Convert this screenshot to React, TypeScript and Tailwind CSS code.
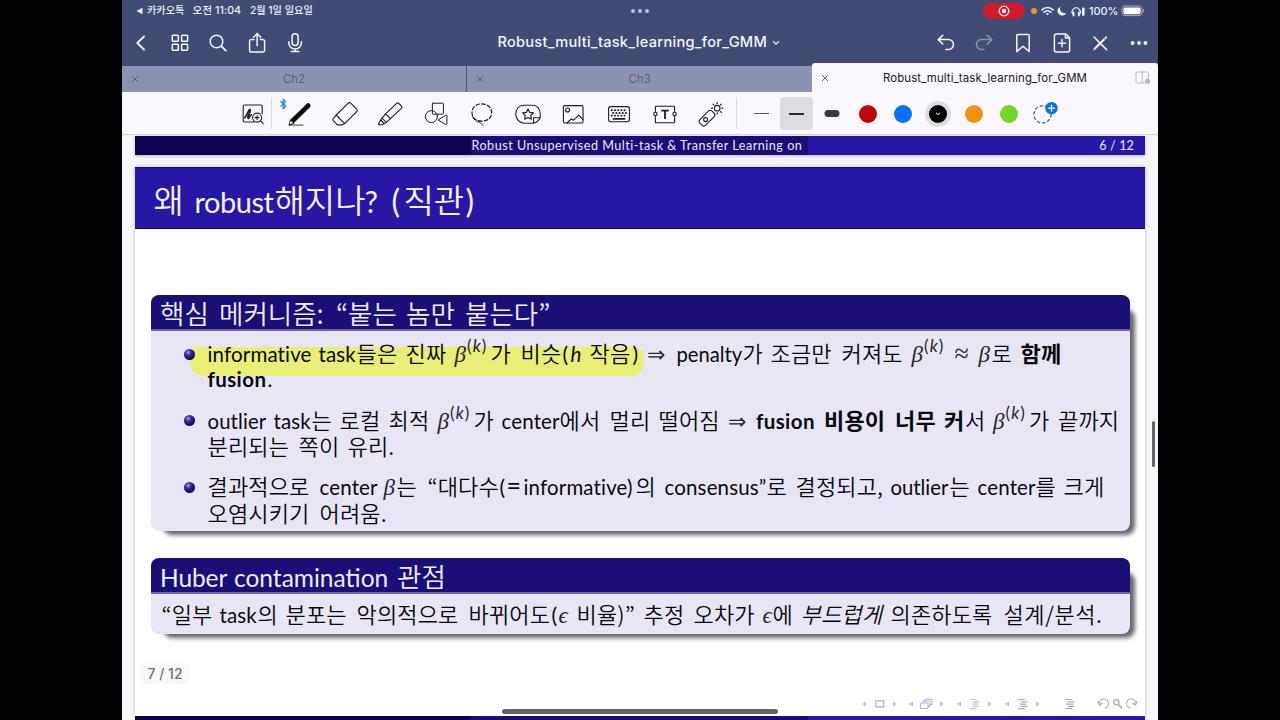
import React from "react";

type P = { children?: React.ReactNode; className?: string };

/* Korean, Latin and math runs of a slide line; each run has its own measured width */
const K = ({ children, className = "" }: P) => (
  <span className={`shrink-0 whitespace-pre font-['Noto_Sans_CJK_KR',sans-serif] ${className}`}>{children}</span>
);
const L = ({ children, className = "text-[20.5px] font-normal" }: P) => (
  <span className={`shrink-0 whitespace-pre font-[Lato,sans-serif] ${className}`}>{children}</span>
);
const M = ({ children, className = "" }: P) => (
  <span className={`shrink-0 whitespace-pre font-['Liberation_Serif',serif] leading-none text-[#26262e] ${className}`}>{children}</span>
);
const BetaK = ({ className = "" }: P) => (
  <M className={`flex text-[23px] ${className}`}>
    <i>β</i>
    <span className="relative -top-[6px] left-[1px] font-[Lato,sans-serif] text-[17px] font-normal tracking-[1px]">
      (<i>k</i>)
    </span>
  </M>
);
const Line = ({ children, className = "" }: P) => (
  <div className={`flex h-[26.5px] items-baseline text-[22px] font-[350] leading-[26.5px] tracking-[0.15px] text-[#08080f] ${className}`}>
    {children}
  </div>
);
const Item = ({ children }: P) => (
  <li className="flex h-[53px]">
    <span className="mr-[12.5px] mt-[9.5px] h-[11px] w-[11px] shrink-0 rounded-full bg-[radial-gradient(circle_at_38%_32%,#a9a4e0_0%,#3a2f9a_28%,#160b66_62%,#0d0540_100%)]" />
    <div>{children}</div>
  </li>
);

const Svg = ({ w = 26, h = 26, sw = 1.5, className = "", children }: P & { w?: number; h?: number; sw?: number }) => (
  <svg
    width={w}
    height={h}
    viewBox={`0 0 ${w} ${h}`}
    fill="none"
    stroke="currentColor"
    strokeWidth={sw}
    strokeLinecap="round"
    strokeLinejoin="round"
    className={`shrink-0 ${className}`}
  >
    {children}
  </svg>
);
const NavCell = ({ children, className = "" }: P) => (
  <button className={`flex w-[38.6px] items-center justify-center ${className}`}>{children}</button>
);
const ToolCell = ({ children }: P) => (
  <button className="relative flex w-[45.75px] items-center justify-center">{children}</button>
);
const PenCell = ({ children }: P) => (
  <button className="relative flex w-[35.45px] shrink-0 items-center justify-center">{children}</button>
);

const StatusBar = () => (
  <div className="flex h-[22px] items-center text-[11px] font-medium text-[#eef0fa]">
    <div className="flex flex-1 items-center pl-[14px] font-[Inter,'Noto_Sans_CJK_KR',sans-serif]">
      <svg width="7" height="8" viewBox="0 0 7 8" className="mr-[4px]">
        <path d="M0.5 4 6.5 0.8V7.2Z" fill="currentColor" />
      </svg>
      <span className="w-[45.5px] whitespace-nowrap text-[10.2px]">카카오톡</span>
      <span className="w-[57.5px] whitespace-nowrap text-[10.7px]">오전 11:04</span>
      <span className="whitespace-nowrap text-[10.2px]">2월 1일 일요일</span>
    </div>
    <div className="flex gap-[3px]">
      <span className="h-[4px] w-[4px] rounded-full bg-[#b3bfe6]" />
      <span className="h-[4px] w-[4px] rounded-full bg-[#b3bfe6]" />
      <span className="h-[4px] w-[4px] rounded-full bg-[#b3bfe6]" />
    </div>
    <div className="flex flex-1 items-center justify-end pr-[14px]">
      <span className="mr-[6px] flex h-[16px] w-[42px] items-center justify-center rounded-full bg-[#d01c2a]">
        <Svg w={12} h={12} sw={1.3}>
          <circle cx="6" cy="6" r="4.8" />
          <circle cx="6" cy="6" r="2.2" fill="currentColor" stroke="none" />
        </Svg>
      </span>
      <span className="mr-[4px] h-[6px] w-[6px] rounded-full bg-[#f0922b]" />
      <Svg w={13} h={10} sw={1.7} className="mr-[3px]">
        <path d="M1 3.8C4.2.7 8.8.7 12 3.8M3.2 6.1c1.9-1.8 4.7-1.8 6.6 0" />
        <path d="M6.5 9.3 4.9 7.7a2.3 2.3 0 0 1 3.2 0Z" fill="currentColor" stroke="none" />
      </Svg>
      <svg width="10" height="10" viewBox="0 0 10 10" className="mr-[4px]">
        <path d="M3.4.7A4.6 4.6 0 1 0 9.3 6.9 4.6 4.6 0 0 1 3.4.7Z" fill="currentColor" />
      </svg>
      <Svg w={15} h={11} sw={1.2} className="mr-[3px]">
        <path d="M2.2 8.6A4 4 0 1 1 8.2 8.6" />
        <path d="M2.6 6.3v3.2M7.8 6.3v3.2" strokeWidth="1.8" />
        <rect x="11" y="1.5" width="2.6" height="8.3" rx=".8" fill="currentColor" stroke="none" />
      </Svg>
      <span className="w-[31px] whitespace-nowrap font-[Inter,sans-serif] text-[11px] tracking-[-0.1px]">100%</span>
      <Svg w={24} h={12} sw={1} className="-mr-[1px] ml-[1px]">
        <rect x="1" y="1" width="20" height="9.6" rx="3" stroke="#a3abc8" />
        <rect x="2.4" y="2.4" width="17.2" height="6.8" rx="1.8" fill="#fff" stroke="none" />
        <path d="M22.4 4.6v2.4" stroke="#a3abc8" />
      </Svg>
    </div>
  </div>
);

const NavBar = () => (
  <div className="flex h-[41px] items-stretch text-[#f3f5fd]">
    <NavCell>
      <Svg sw={1.8}><path d="M16 6.5 9.3 13 16 19.5" /></Svg>
    </NavCell>
    <NavCell>
      <Svg>
        <rect x="5.3" y="5.3" width="6" height="6" rx=".8" /><rect x="14.6" y="5.3" width="6" height="6" rx=".8" />
        <rect x="5.3" y="14.2" width="6" height="6" rx=".8" /><rect x="14.6" y="14.2" width="6" height="6" rx=".8" />
      </Svg>
    </NavCell>
    <NavCell>
      <Svg><circle cx="11.5" cy="11.5" r="6.3" /><path d="m16.2 16.2 4.6 4.4" strokeWidth="1.8" /></Svg>
    </NavCell>
    <NavCell>
      <Svg>
        <path d="M10 9.5H7.4a1.8 1.8 0 0 0-1.8 1.8v9a1.8 1.8 0 0 0 1.8 1.8h11.4a1.8 1.8 0 0 0 1.8-1.8v-9a1.8 1.8 0 0 0-1.8-1.8H16.2" />
        <path d="M13.1 15.8V4M9.6 7.2 13.1 3.6l3.5 3.6" />
      </Svg>
    </NavCell>
    <NavCell>
      <Svg className="-translate-x-px">
        <rect x="10.1" y="3.8" width="6" height="11.6" rx="3" />
        <path d="M6.8 11.8v1a6.3 6.3 0 0 0 12.6 0v-1M13.1 19.2v2.3M9.4 21.6h7.4" />
      </Svg>
    </NavCell>
    <div className="flex flex-1 items-center justify-center pl-[35px] font-[Inter,sans-serif] text-[14.6px] font-medium">
      <span className="w-[272px] whitespace-nowrap text-center tracking-[0.27px]">Robust_multi_task_learning_for_GMM</span>
      <Svg w={8} h={6} sw={1.2} className="ml-[4px]"><path d="M1.5 1.7 4 4.2l2.5-2.5" /></Svg>
    </div>
    <NavCell>
      <Svg><path d="M9.8 5.2 5.2 9.6l4.6 4.4M5.4 9.6h10.2a4.9 4.9 0 0 1 0 9.8H12.8" /></Svg>
    </NavCell>
    <NavCell className="text-[#8a93b4]">
      <Svg><path d="M16.2 5.2 20.8 9.6l-4.6 4.4M20.6 9.6H10.4a4.9 4.9 0 0 0 0 9.8H13" /></Svg>
    </NavCell>
    <NavCell>
      <Svg><path d="M6.8 5.4a.8.8 0 0 1 .8-.8h10.8a.8.8 0 0 1 .8.8V21.6l-6.2-5.4-6.2 5.4Z" /></Svg>
    </NavCell>
    <NavCell>
      <Svg>
        <path d="M16.6 3.9H7.4a2 2 0 0 0-2 2v14.2a2 2 0 0 0 2 2h11.2a2 2 0 0 0 2-2V7.9Z" />
        <path d="M16.4 4v4h4.1M13 9.6v7.2M9.4 13.2h7.2" />
      </Svg>
    </NavCell>
    <NavCell>
      <Svg><path d="M7 7 19.6 19.6" /><path d="M6.6 19.9l.7-2L16.8 8.5l1.2 1.2-9.4 9.4Z" fill="currentColor" strokeWidth=".5" /><path d="m18.4 8 .9-.9" strokeWidth="1.8" /></Svg>
    </NavCell>
    <NavCell>
      <Svg sw={0}>
        <circle cx="6.6" cy="13" r="1.9" fill="currentColor" /><circle cx="13" cy="13" r="1.9" fill="currentColor" /><circle cx="19.4" cy="13" r="1.9" fill="currentColor" />
      </Svg>
    </NavCell>
  </div>
);

const TabX = ({ className = "" }: P) => (
  <Svg w={8} h={8} sw={1} className={className}><path d="m1.2 1.2 5.6 5.6M6.8 1.2 1.2 6.8" /></Svg>
);
const Tabs = () => (
  <div className="flex h-[29px] items-end font-[Inter,sans-serif] text-[11.3px]">
    <div className="flex h-[26px] w-[345px] items-center border-r border-[#4d587f] bg-[#8c93b1] pl-[9px] pr-[17px] text-[#59617f]">
      <TabX />
      <span className="flex-1 text-center">Ch2</span>
    </div>
    <div className="flex h-[26px] w-[345px] items-center bg-[#8c93b1] pl-[9px] pr-[17px] text-[#59617f]">
      <TabX />
      <span className="flex-1 text-center">Ch3</span>
    </div>
    <div className="flex h-[29px] flex-1 items-center rounded-t-[3px] bg-[#faf8fd] pl-[9px] pr-[7px] text-[#17171c]">
      <TabX className="text-[#66666c]" />
      <span className="flex-1 whitespace-nowrap pl-[6px] pt-[2px] text-center text-[11.4px] tracking-[0.12px]">Robust_multi_task_learning_for_GMM</span>
      <Svg w={16} h={14} sw={1} className="text-[#b9b9c0]">
        <path d="M9.5 12H2.6A1.6 1.6 0 0 1 1 10.4V2.6A1.6 1.6 0 0 1 2.6 1h9.3a1.6 1.6 0 0 1 1.6 1.6V7M7.2 1v11" />
        <circle cx="12.6" cy="10.3" r="2.7" fill="currentColor" stroke="none" />
      </Svg>
    </div>
  </div>
);

const Toolbar = () => (
  <div className="relative flex h-[43px] shrink-0 items-stretch border-b border-[#d6d5dd] bg-[#faf8fd] pl-[113px] pt-[1px] text-[#1d1d20]">
    <button className="flex w-[36px] items-center justify-center">
      <Svg sw={1.1}>
        <path d="M14 21H4.6A1.4 1.4 0 0 1 3.2 19.6V5.4A1.4 1.4 0 0 1 4.6 4h16.2a1.4 1.4 0 0 1 1.4 1.4v7" />
        <path d="M4.8 16.8C7 14 8.8 7.6 10.1 8.6 11.6 9.8 6.6 16 8 17.2c1.1.9 1.6-3.4 3.4-3.4" strokeWidth="1.7" />
        <circle cx="17.1" cy="16.6" r="4.5" />
        <path d="m20.4 19.9 2.8 2.8M17.1 14.6v4M15.1 16.6h4" />
      </Svg>
    </button>
    <span className="h-[31px] w-px self-center bg-[#d9d8de]" />
    <div className="ml-[4px] flex">
      <ToolCell>
        <Svg sw={1} className="text-[#0c0c0e]">
          <path d="m6.2 20.2 16-15.6" strokeWidth="4.8" />
          <path d="m3.2 23.6 1.2-4.6 3.4 3Z" fill="#fff" strokeWidth=".9" />
          <path d="M3 24.1h14" strokeWidth=".8" />
        </Svg>
        <Svg w={9} h={12} sw={1.2} className="absolute left-[3px] top-[5px] text-[#1788cf]"><path d="m1.8 3.4 5 4.8-2.6 2.4V1.2l2.6 2.4-5 4.8" /></Svg>
      </ToolCell>
      <ToolCell>
        <Svg sw={1.1}>
          <path d="M16.2 2.2a1.8 1.8 0 0 1 2.5 0l6 6a1.8 1.8 0 0 1 0 2.4L12.6 22.6 4.2 14Z" />
          <path d="M4.2 14 1.2 17.8a1.4 1.4 0 0 0 0 1.8l4.3 4.3h4.6l2.5-1.3" />
        </Svg>
      </ToolCell>
      <ToolCell>
        <Svg sw={1.1}>
          <path d="M19.6 2.4a1.6 1.6 0 0 1 2.2 0l2.6 2.7a1.6 1.6 0 0 1 0 2.2L13.4 17.6 8.6 12.8Z" />
          <path d="m8.6 12.8-3.6 4.4 4.4 4.2 4-3.8M5 17.2 3.6 19l3.6 3.6 2.2-1.2M3.6 19 1.4 23.6l3.6.2 2.2-1.2" />
        </Svg>
      </ToolCell>
      <ToolCell>
        <Svg sw={1}>
          <rect x="9.4" y="2.2" width="11" height="11" rx=".8" />
          <circle cx="8.4" cy="15.6" r="6" />
          <path d="m15.4 18.8 7.4-4.6a.8.8 0 0 1 1.1.7v8a.8.8 0 0 1-1.1.7Z" />
        </Svg>
      </ToolCell>
      <ToolCell>
        <Svg sw={1.2}>
          <path d="M12.7 20.2c-5.6 0-9.7-3.4-9.7-8.6s4.2-8.8 9.7-8.8 10 3.6 10 8.8-4.4 8.6-10 8.6" strokeDasharray="3.6 2.2" />
          <path d="M3.4 15.6c1.6 3.4 4.6 5 7.6 6 1 .5 1.4 1.6 3 2.6" strokeWidth="1" strokeDasharray="4 1.2" />
        </Svg>
      </ToolCell>
      <ToolCell>
        <Svg sw={1.1}>
          <path d="M18.5 22.2H9A8.6 9 0 0 1 .8 13.2C.8 8 4 4.2 8.6 4.2h8.8c4.6 0 7.8 3.6 7.8 8.6v4.2c-1.6 2.8-3.8 4.6-6.7 5.2v-5.4h6.7" />
          <path d="m13 8 1.7 3.4 3.7.5-2.7 2.6.7 3.7-3.4-1.8-3.4 1.8.7-3.7-2.7-2.6 3.7-.5Z" />
        </Svg>
      </ToolCell>
      <ToolCell>
        <Svg sw={1.1}>
          <rect x="3.4" y="4.6" width="19.6" height="17.4" rx="1.2" />
          <circle cx="7.6" cy="9" r="2" />
          <path d="m7 22 4.2-4 2.4 1.2 5.2-5 4.2 4.4" />
        </Svg>
      </ToolCell>
      <ToolCell>
        <Svg sw={1.1}>
          <rect x="2.6" y="5.6" width="20.8" height="15.2" rx="2.2" />
          <path d="M5.6 9.2h15.2M7 12h13M5.6 14.6h15.2" strokeWidth="1.8" strokeDasharray=".3 2.9" />
          <path d="M7.6 17.8h11" strokeWidth="1.8" />
        </Svg>
      </ToolCell>
      <ToolCell>
        <Svg sw={1.1}>
          <path d="M3.4 10.8V6a.8.8 0 0 1 .8-.8h17.6a.8.8 0 0 1 .8.8v4.8M3.4 15v6a.8.8 0 0 0 .8.8h17.6a.8.8 0 0 0 .8-.8V15" />
          <circle cx="3.4" cy="13" r="1.7" /><circle cx="22.6" cy="13" r="1.7" />
          <path d="M9.2 9.6h7.6M13 9.6v8.4" strokeWidth="1.8" strokeLinecap="butt" />
        </Svg>
      </ToolCell>
      <ToolCell>
        <Svg sw={1.1}>
          <rect x="-4" y="-8.5" width="8" height="17" rx="2.6" transform="translate(9 17.2) rotate(45)" />
          <circle cx="7.6" cy="18.6" r="2" />
          <circle cx="19.2" cy="7.2" r="2.8" />
          <path d="M19.2 1.6v.9M19.2 11.9v.9M13.6 7.2h.9M23.9 7.2h.9M15.2 3.2l.7.7M22.6 10.6l.7.7M23.2 3.2l-.7.7" strokeWidth="1.3" />
        </Svg>
      </ToolCell>
    </div>
    <span className="ml-[2px] h-[31px] w-px self-center bg-[#d9d8de]" />
    <div className="ml-[7px] flex">
      <PenCell><span className="h-px w-[15px] bg-[#55555a]" /></PenCell>
      <PenCell>
        <span className="flex h-[33px] w-[33px] shrink-0 items-center justify-center rounded-[4px] bg-[#dddce2]">
          <span className="h-[2px] w-[15px] bg-[#2a2a2e]" />
        </span>
      </PenCell>
      <PenCell><span className="h-[7px] w-[15px] -translate-x-[0.5px] rounded-[3.5px] bg-[#38383d]" /></PenCell>
      <PenCell><span className="h-[18px] w-[18px] rounded-full bg-[#c10508]" /></PenCell>
      <PenCell><span className="h-[18px] w-[18px] rounded-full bg-[#0b72f8]" /></PenCell>
      <PenCell>
        <span className="flex h-[26px] w-[26px] shrink-0 items-center justify-center rounded-full bg-[#dddce2]">
          <span className="flex h-[18px] w-[18px] items-center justify-center rounded-full bg-black text-white">
            <Svg w={6} h={4} sw={1}><path d="M1.2 1 3 2.6 4.8 1" /></Svg>
          </span>
        </span>
      </PenCell>
      <PenCell><span className="h-[18px] w-[18px] rounded-full bg-[#f0911c]" /></PenCell>
      <PenCell><span className="h-[18px] w-[18px] rounded-full bg-[#77d42c]" /></PenCell>
      <PenCell>
        <Svg w={28} h={26} sw={1.2} className="translate-x-[0.5px] text-[#1b5d96]">
          <circle cx="11" cy="13.4" r="8.6" strokeDasharray="2.6 2.8" />
          <circle cx="20" cy="7.2" r="6.2" fill="#0b6fe0" stroke="none" />
          <path d="M20 4.2v6M17 7.2h6" stroke="#fff" strokeWidth="1.3" />
        </Svg>
      </PenCell>
    </div>
  </div>
);

const Block = ({ title, children, className = "" }: P & { title: React.ReactNode }) => (
  <section className={`relative ml-[15.5px] mr-[15.5px] ${className}`}>
    <div className="absolute bottom-[-4px] left-[12px] right-[-5px] top-[14px] rounded-[9px] bg-[#66666c] blur-[2px]" />
    <div className="relative flex h-full flex-col overflow-hidden rounded-[8px] bg-[#e8e6f5]">
      <h2 className="flex h-[36px] shrink-0 items-baseline border-b-2 border-[#6f63b0] bg-[#1a0e77] pl-[9.5px] text-[26.5px] font-[350] leading-[35px] text-[#efeefb]">
        {title}
      </h2>
      {children}
    </div>
  </section>
);

const Tri = ({ left = false }: { left?: boolean }) => (
  <svg width="4" height="6" viewBox="0 0 4 6" className="shrink-0 fill-[#c4c1dc]">
    <path d={left ? "M4 .5v5L0 3Z" : "M0 .5v5L4 3Z"} />
  </svg>
);
const Lines = ({ className = "" }: P) => (
  <Svg w={11} h={12} sw={1.2} className={className}>
    <path d="M1.5 1.5h6M4 3.8h6M3 6.1h6M4 8.4h6M1.5 10.7h6" />
  </Svg>
);
const BeamerNav = () => (
  <div className="flex h-[14px] items-center text-[#aaa5cd]">
    <div className="flex w-[35px] items-center justify-between"><Tri left /><Svg w={10} h={8} sw={1.1}><path d="M.8.9h8v6h-8Z" strokeLinejoin="miter" /></Svg><Tri /></div>
    <div className="ml-[12px] flex w-[35px] items-center justify-between"><Tri left />
      <Svg w={13} h={12} sw={0.9}><path d="M1 5h7v5.5H1ZM3 5V3.1h7v5.5H8M5 3.1V1.2h7v5.4h-2" /></Svg><Tri /></div>
    <div className="ml-[13px] flex w-[35px] items-center justify-between"><Tri left /><Lines className="text-[#c5c2e2]" /><Tri /></div>
    <div className="ml-[13px] flex w-[35px] items-center justify-between"><Tri left /><Lines /><Tri /></div>
    <Lines className="ml-[24px]" />
    <Svg w={43} h={13} sw={1.1} className="ml-[21px] text-[#a8a5bd]">
      <path d="M2 4.5 3.4 8 6.4 6M3.4 7.6A4.6 4.6 0 1 1 9 11" />
      <circle cx="20.4" cy="5.2" r="2.6" /><path d="m22.3 7.2 3.4 3.6" strokeWidth="1.6" />
      <path d="M41 4.5 39.6 8 36.6 6M39.6 7.6A4.6 4.6 0 1 0 34 11" />
    </Svg>
  </div>
);

const Slide = () => (
  <article className="mt-[12.5px] h-[549px] w-[1010px] bg-white shadow-[0_0_3px_rgba(60,60,90,0.35)]">
    <h1 className="flex h-[61.5px] items-baseline border-b border-t border-b-[#14087a] border-t-[#170a7c] bg-[#2618a5] pl-[18.5px] text-[33px] font-[350] leading-[63px] text-[#f4f3fd]">
      <K className="w-[41px]">왜</K>
      <L className="w-[79px] text-[29px] font-normal tracking-[-0.45px]">robust</L>
      <K className="w-[91px] pl-[1px]">해지나</K>
      <L className="w-[27px] text-[30px] font-normal">?</L>
      <L className="w-[12px] text-[32px] font-normal">(</L>
      <K className="w-[62px]">직관</K>
      <L className="text-[32px] font-normal">)</L>
    </h1>

    <Block
      className="mt-[66.5px] h-[236px]"
      title={
        <>
          <K className="w-[59px]">핵심</K>
          <K className="w-[117px]">메커니즘:</K>
          <K className="w-[70px]">“붙는</K>
          <K className="w-[59px]">놈만</K>
          <K>붙는다”</K>
        </>
      }
    >
      <div className="absolute left-[39px] top-[52px] h-[29px] w-[454px] rounded-[4px_10px_14px_14px] bg-[#e8ee76]" />
      <ul className="relative flex flex-col gap-[13.5px] pl-[33.5px] pt-[8px]">
        <Item>
          <Line>
            <L className="w-[111px] text-[20.5px] font-normal">informative</L>
            <L className="w-[38px] text-[20.5px] font-normal">task</L>
            <K className="w-[49px]">들은</K>
            <K className="w-[49px]">진짜</K>
            <BetaK className="w-[36px]" />
            <K className="w-[30px]">가</K>
            <K className="w-[42px]">비슷</K>
            <L className="w-[8px] text-[21px] font-normal">(</L>
            <L className="w-[19px] text-[20.5px] font-normal italic">h</L>
            <K className="w-[43px]">작음</K>
            <L className="w-[14px] text-[21px] font-normal">)</L>
            <M className="w-[30px] text-[22px]">⇒</M>
            <L className="w-[66px] text-[20.2px] font-normal tracking-normal">penalty</L>
            <K className="w-[28px]">가</K>
            <K className="w-[71px]">조금만</K>
            <K className="w-[70px]">커져도</K>
            <BetaK className="w-[43px]" />
            <M className="w-[24px] text-[26px]">≈</M>
            <M className="w-[13px] text-[23px] italic">β</M>
            <K className="w-[29px]">로</K>
            <K className="font-bold">함께</K>
          </Line>
          <Line>
            <L className="w-[60px] text-[20.5px] font-bold tracking-[0.4px]">fusion</L>
            <L>.</L>
          </Line>
        </Item>
        <Item>
          <Line>
            <L className="w-[66px] text-[20.3px] font-normal">outlier</L>
            <L className="w-[38px] text-[20.5px] font-normal">task</L>
            <K className="w-[28px]">는</K>
            <K className="w-[49px]">로컬</K>
            <K className="w-[49px]">최적</K>
            <BetaK className="w-[36px]" />
            <K className="w-[28px]">가</K>
            <L className="w-[58px] text-[20.5px] font-normal">center</L>
            <K className="w-[50px]">에서</K>
            <K className="w-[49px]">멀리</K>
            <K className="w-[69px]">떨어짐</K>
            <M className="w-[28.5px] text-[22px]">⇒</M>
            <L className="w-[68px] text-[20.5px] font-bold tracking-[0.4px]">fusion</L>
            <K className="w-[71px] font-bold">비용이</K>
            <K className="w-[49px] font-bold">너무</K>
            <K className="w-[21px] font-bold">커</K>
            <K className="w-[28px]">서</K>
            <BetaK className="w-[36px]" />
            <K className="w-[29px]">가</K>
            <K>끝까지</K>
          </Line>
          <Line>
            <K className="w-[91px]">분리되는</K>
            <K className="w-[49px]">쪽이</K>
            <K>유리.</K>
          </Line>
        </Item>
        <Item>
          <Line>
            <K className="w-[112px]">결과적으로</K>
            <L className="w-[64px] text-[20.5px] font-normal">center</L>
            <M className="w-[13px] text-[23px] italic">β</M>
            <K className="w-[31px]">는</K>
            <K className="w-[72px]">“대다수</K>
            <L className="w-[7px] text-[21px] font-normal">(</L>
            <L className="w-[17px] text-[25px] font-normal leading-none">=</L>
            <L className="w-[112px] text-[20.4px] font-normal tracking-[0.2px]">informative)</L>
            <K className="w-[29px]">의</K>
            <L className="w-[102px] text-[20.5px] font-normal">consensus”</L>
            <K className="w-[29px]">로</K>
            <K className="w-[95px]">결정되고,</K>
            <L className="w-[59px] text-[20.3px] font-normal tracking-normal">outlier</L>
            <K className="w-[28px]">는</K>
            <L className="w-[58px] text-[20.5px] font-normal">center</L>
            <K className="w-[28px]">를</K>
            <K>크게</K>
          </Line>
          <Line>
            <K className="w-[112px]">오염시키기</K>
            <K>어려움.</K>
          </Line>
        </Item>
      </ul>
    </Block>

    <Block
      className="mt-[27px] h-[76px]"
      title={
        <>
          <L className="w-[74px] text-[24.5px] font-normal tracking-[-0.1px]">Huber</L>
          <L className="w-[163px] text-[24.5px] font-normal">contamination</L>
          <K>관점</K>
        </>
      }
    >
      <Line className="pl-[11px] pt-[5.5px]">
        <K className="w-[58px]">“일부</K>
        <L className="w-[38px] text-[20.5px] font-normal">task</L>
        <K className="w-[28px]">의</K>
        <K className="w-[71px]">분포는</K>
        <K className="w-[112px]">악의적으로</K>
        <K className="w-[83px]">바뀌어도</K>
        <L className="w-[7px] text-[21px] font-normal">(</L>
        <M className="w-[18px] text-[23px] italic">ϵ</M>
        <K className="w-[67px]">비율)”</K>
        <K className="w-[50px]">추정</K>
        <K className="w-[69px]">오차가</K>
        <M className="w-[10px] text-[23px] italic">ϵ</M>
        <K className="w-[28px]">에</K>
        <K className="w-[90px] italic">부드럽게</K>
        <K className="w-[113px]">의존하도록</K>
        <K className="tracking-[0.6px]">설계/분석.</K>
      </Line>
    </Block>

    <div className="ml-[5px] mt-[29px] flex h-[21px] w-[50px] items-center justify-center rounded-[5px] bg-[#f9f9fa] font-[Inter,sans-serif] text-[14px] font-medium text-[#6e6e72]">
      7 / 12
    </div>
    <div className="mt-[12.5px] flex justify-end pr-[6px]">
      <BeamerNav />
    </div>
  </article>
);

export default function App() {
  return (
    <div className="flex h-[720px] w-[1280px] justify-start overflow-hidden bg-black pl-[122px]">
      <main className="relative flex h-full w-[1036px] flex-col overflow-hidden bg-[#f6f5f9]">
        <header className="shrink-0 bg-[#404c73]">
          <StatusBar />
          <NavBar />
          <Tabs />
        </header>
        <Toolbar />
        <div className="flex shrink-0 flex-col pl-[13px] pt-[1px]">
          <div className="flex h-[18.5px] w-[1010px] font-[Lato,sans-serif] text-[12.6px] leading-[19px] text-[#e9e8fa] shadow-[0_1px_3px_rgba(60,60,90,0.35)]">
            <span className="w-[336px] bg-[#0d0450]" />
            <span className="w-[337px] whitespace-nowrap bg-[#190e76] pl-[0.5px] tracking-[0.5px]">
              Robust Unsupervised Multi-task &amp; Transfer Learning on
            </span>
            <span className="flex-1 bg-[#2618a5] pr-[11px] text-right tracking-[0.1px]">6 / 12</span>
          </div>
          <Slide />
          <div className="flex h-[5px] w-[1010px]">
            <span className="w-[336px] bg-[#0d0450]" />
            <span className="w-[337px] bg-[#190e76]" />
            <span className="flex-1 bg-[#2618a5]" />
          </div>
        </div>
        <span className="absolute left-[1030px] top-[421px] h-[46px] w-[3px] rounded-full bg-[#636368]" />
        <span className="absolute left-[380px] top-[708.5px] h-[5px] w-[276px] rounded-full bg-[#656664]" />
      </main>
    </div>
  );
}
